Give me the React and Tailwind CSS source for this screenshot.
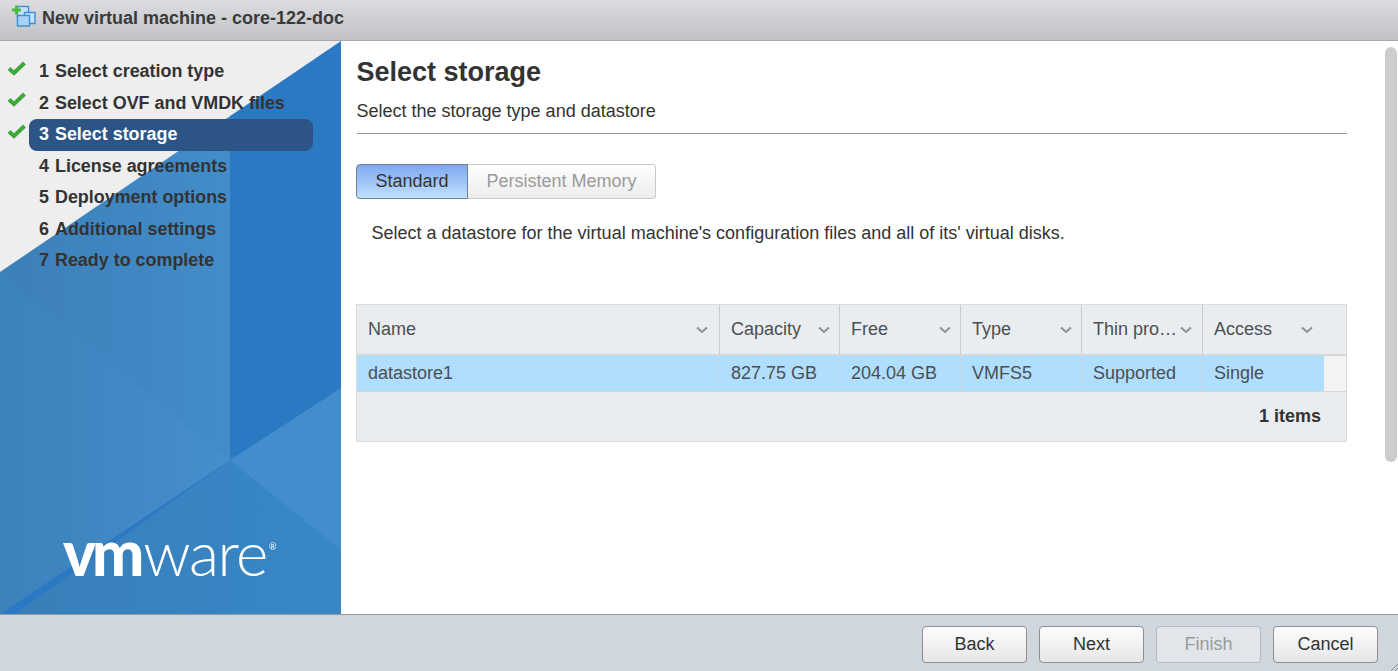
import React from "react";

const Check = () => (
  <svg width="20" height="16" viewBox="0 0 20 16" className="absolute left-[7px] top-[5px]">
    <path d="M2 7.5 L7 12 L17.5 2" fill="none" stroke="#3fa83a" strokeWidth="4" strokeLinejoin="miter" />
  </svg>
);

const Chevron = () => (
  <svg width="12" height="8" viewBox="0 0 12 8" className="shrink-0">
    <path d="M1 1.5 L6 6 L11 1.5" fill="none" stroke="#8a9299" strokeWidth="2" />
  </svg>
);

const steps = [
  ["1", "Select creation type", true],
  ["2", "Select OVF and VMDK files", true],
  ["3", "Select storage", true, true],
  ["4", "License agreements"],
  ["5", "Deployment options"],
  ["6", "Additional settings"],
  ["7", "Ready to complete"],
];

const cols = [
  ["Name", "datastore1", "w-[363px]", "pr-[11px]", "w-[363px]"],
  ["Capacity", "827.75 GB", "w-[120px]", "pr-[9px]", "w-[120px]"],
  ["Free", "204.04 GB", "w-[121px]", "pr-[9px]", "w-[121px]"],
  ["Type", "VMFS5", "w-[121px]", "pr-[9px]", "w-[121px]"],
  ["Thin pro…", "Supported", "w-[121px]", "pr-[10px]", "w-[121px]"],
  ["Access", "Single", "w-[143px]", "pr-[33px]", "w-[121px]"],
];

function SidebarArt() {
  return (
    <svg className="absolute inset-0 w-full h-full" viewBox="0 0 341 573" preserveAspectRatio="none">
      <defs>
        <linearGradient id="a" x1="0" x2="1" y1="0" y2="0">
          <stop offset="0" stopColor="#3c7fb9" />
          <stop offset="1" stopColor="#428dca" />
        </linearGradient>
        <linearGradient id="b" x1="0" x2="1" y1="0" y2="0">
          <stop offset="0" stopColor="#3c82bb" />
          <stop offset="1" stopColor="#458fcd" />
        </linearGradient>
        <linearGradient id="c" x1="0" x2="1" y1="0" y2="0">
          <stop offset="0" stopColor="#397fb9" />
          <stop offset="1" stopColor="#3787c7" />
        </linearGradient>
      </defs>
      <rect width="341" height="573" fill="#2c79c3" />
      <polygon points="0,231 230,0 230,419 0,231" fill="url(#a)" />
      <polygon points="0,231 230,419 0,573" fill="url(#b)" />
      <polygon points="230,419 341,347 341,573 230,573" fill="#428dcc" />
      <polygon points="230,419 341,509 341,573 15,573" fill="url(#c)" />
      <polygon points="0,231 341,0 0,0" fill="#eeeeee" />
    </svg>
  );
}

export default function App() {
  return (
    <div className="h-[671px] w-[1398px] overflow-hidden flex flex-col bg-white text-[#333] font-['Liberation_Sans',Arial,sans-serif]">
      <div className="h-[41px] shrink-0 border-b border-[#a6a6a6] bg-gradient-to-b from-[#dcdde0] to-[#c0c1c4] flex items-center pl-[12px] gap-[6px]">
        <svg width="24" height="24" viewBox="0 0 24 24" className="mb-[8px]">
          <rect x="5.5" y="2.5" width="11" height="12" fill="#c7e2f8" stroke="#3d8ed8" strokeWidth="1.4" />
          <rect x="12.5" y="8.5" width="10.5" height="11" fill="#c7e2f8" stroke="#3d8ed8" strokeWidth="1.4" />
          <rect x="5.5" y="11.5" width="12" height="10.5" fill="#a9d3f6" stroke="#3d8ed8" strokeWidth="1.4" />
          <path d="M4.5 1.5v9M0 6h9" stroke="#4cb848" strokeWidth="3" />
        </svg>
        <span className="text-[18px] font-bold text-[#3a3a3a] mb-[3px]">New virtual machine - core-122-doc</span>
      </div>

      <div className="flex-1 flex min-h-0">
        <div className="relative w-[341px] shrink-0">
          <SidebarArt />
          <div className="relative pt-[14.5px]">
            {steps.map(([n, t, done, active]) => (
              <div key={n} className="relative h-[31.5px]">
                {done && <Check />}
                <div className={"ml-[29px] w-[284px] h-[32px] rounded-[8px] pl-[10px] flex items-center gap-[6px] text-[17.92px] font-bold " + (active ? "bg-[#2c5585] text-white" : "text-[#333]")}>
                  <span>{n}</span>
                  <span>{t}</span>
                </div>
              </div>
            ))}
          </div>
          <div className="absolute left-[63px] top-[480px] text-white text-[62px] leading-[62px] whitespace-nowrap font-['Lato',sans-serif] blur-[0.4px]">
            <span className="font-black tracking-[-4px]">vm</span>
            <span className="font-light tracking-[-1.5px] ml-[3px]">ware</span>
            <span className="absolute left-[206px] top-[20px] text-[9px] leading-[12px] font-normal">®</span>
          </div>
        </div>

        <div className="flex-1 flex min-w-0">
          <div className="flex-1 pl-[15px] pr-[5px] flex flex-col">
            <h1 className="mt-[14px] ml-[0.5px] text-[27px] leading-[34px] font-bold text-[#333]">Select storage</h1>
            <p className="mt-[10px] ml-[0.5px] text-[18px] leading-[24px] text-[#333]">Select the storage type and datastore</p>
            <div className="mt-[10px] ml-[1px] border-b border-[#999] w-[990px]" />
            <div className="mt-[30px] flex h-[35px] text-[18px]">
              <div className="w-[112px] rounded-l-[4px] border border-[#6f7f95] bg-gradient-to-b from-[#7fa9ee] to-[#bfe0ff] flex items-center justify-center text-[#333]">Standard</div>
              <div className="w-[188px] rounded-r-[4px] border border-l-0 border-[#c8c8c8] bg-gradient-to-b from-[#ffffff] to-[#ececec] flex items-center justify-center text-[#9a9a9a]">Persistent Memory</div>
            </div>
            <p className="mt-[22px] ml-[15.5px] text-[18px] leading-[24px] text-[#333]">Select a datastore for the virtual machine's configuration files and all of its' virtual disks.</p>

            <div className="mt-[59px] w-[991px] border border-[#d9dcdf] text-[18px] text-[#4a4f54] bg-[#eaedf0]">
              <div className="flex h-[51px] border-b-2 border-[#d5d8db]">
                {cols.map(([h, , w, pr], i) => (
                  <div key={h} className={w + " " + pr + " flex items-center justify-between pl-[11px] " + (i < 5 ? "border-r border-[#c9cccf]" : "")}>
                    <span className="whitespace-nowrap">{h}</span>
                    <Chevron />
                  </div>
                ))}
              </div>
              <div className="flex h-[36px] bg-[#f3f3f3] border-b border-[#d5d8db]">
                {cols.map(([h, v, , , w], i) => (
                  <div key={h} className={w + " flex items-center pl-[11px] bg-[#b0deff] whitespace-nowrap " + (i < 5 ? "border-r border-[#c5d6e3]" : "")}>{v}</div>
                ))}
              </div>
              <div className="h-[49px] flex items-center justify-end pr-[25px] font-bold text-[#333]">1 items</div>
            </div>
          </div>
          <div className="w-[13px] shrink-0 pt-[6px] pr-[1px]">
            <div className="h-[415px] w-[12px] bg-[#cdcdcd] rounded-full" />
          </div>
        </div>
      </div>

      <div className="h-[57px] shrink-0 border-t border-[#999] bg-[#d0d6de] flex items-start justify-end gap-[12px] pt-[11px] pr-[20px] relative">
        {["Back", "Next"].map((b) => (
          <div key={b} className="w-[105px] h-[37px] rounded-[4px] border border-[#8f8f8f] bg-gradient-to-b from-[#fdfdfd] to-[#e6e6e6] flex items-center justify-center text-[18px] text-[#333]">{b}</div>
        ))}
        <div className="w-[105px] h-[37px] rounded-[4px] border border-[#b5bac1] bg-[#e2e5ea] flex items-center justify-center text-[18px] text-[#979a9e]">Finish</div>
        <div className="w-[105px] h-[37px] rounded-[4px] border border-[#8f8f8f] bg-gradient-to-b from-[#fdfdfd] to-[#e6e6e6] flex items-center justify-center text-[18px] text-[#333]">Cancel</div>
        <svg width="8" height="8" viewBox="0 0 8 8" className="absolute right-0 bottom-0">
          <path d="M8 1 L1 8 M8 5 L5 8" stroke="#8b8f94" strokeWidth="1" />
        </svg>
      </div>
    </div>
  );
}
